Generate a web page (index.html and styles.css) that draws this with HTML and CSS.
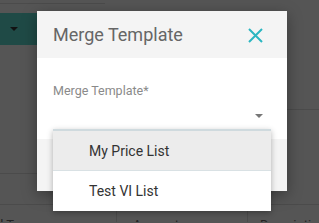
FILE: index.html
```html
<!DOCTYPE html>
<html>
<head>
<meta charset="utf-8">
<link rel="stylesheet" href="styles.css">
</head>
<body>
<div class="page">
  <div class="top"></div>
  <div class="toolbar"><span class="caret-dark"></span></div>
  <div class="rule rule1"></div>
  <div class="rule rule2"></div>
  <div class="table-head">
    <div class="cell c1">d Type</div>
    <div class="cell c2">Amount</div>
    <div class="cell c3">Description</div>
  </div>
</div>

<div class="modal">
  <div class="modal-header">
    <span class="modal-title">Merge Template</span>
    <svg class="close" width="15" height="15" viewBox="0 0 15 15">
      <path d="M1 1 L14 14 M14 1 L1 14" stroke="#2bb6c1" stroke-width="2" fill="none"/>
    </svg>
  </div>
  <div class="modal-body">
    <div class="label">Merge Template*</div>
    <div class="select"><span class="caret"></span></div>
  </div>
  <div class="modal-footer"></div>
</div>

<div class="menu">
  <div class="item active">My Price List</div>
  <div class="item">Test VI List</div>
</div>
</body>
</html>
```

FILE: styles.css
```css
html, body {
  margin: 0;
  padding: 0;
}
body {
  width: 319px;
  height: 223px;
  overflow: hidden;
  background: #555555;
  font-family: Roboto, "Liberation Sans", sans-serif;
  position: relative;
}
.page {
  display: flex;
  flex-direction: column;
}
.top {
  height: 3px;
  width: 105px;
  border-bottom: 1px solid #4b4b4b;
}
.toolbar {
  margin-top: 9px;
  height: 32px;
  width: 140px;
  background: #1f4a46;
  display: flex;
  align-items: center;
  padding-left: 10px;
  box-sizing: border-box;
}
.caret-dark {
  width: 0;
  height: 0;
  border-left: 4px solid transparent;
  border-right: 4px solid transparent;
  border-top: 4px solid #121212;
}
.rule {
  height: 0;
  border-top: 1px solid #4b4b4b;
}
.rule1 {
  margin-top: 64px;
  margin-left: 287px;
}
.rule2 {
  margin-top: 63px;
  width: 37px;
}
.table-head {
  margin-top: 30px;
  border-top: 1px solid #4b4b4b;
  display: grid;
  grid-template-columns: 116px 131px 1fr;
  height: 17px;
  overflow: hidden;
}
.cell {
  font-size: 13px;
  line-height: 15px;
  color: #222;
  padding-top: 12px;
  white-space: nowrap;
  overflow: hidden;
}
.c1 { padding-left: 0; text-indent: -4px; }
.c2 { border-left: 1px solid #4b4b4b; padding-left: 16px; }
.c3 { border-left: 1px solid #4b4b4b; padding-left: 12px; }

.modal {
  position: absolute;
  left: 37px;
  top: 11px;
  width: 250px;
  height: 180px;
  background: #fff;
  box-shadow: 0 4px 14px rgba(0, 0, 0, 0.35);
  display: flex;
  flex-direction: column;
}
.modal-header {
  height: 47px;
  background: #f4f4f4;
  display: flex;
  align-items: center;
  justify-content: space-between;
  padding: 0 24px 0 16px;
}
.modal-title {
  font-size: 18px;
  color: #666;
}
.close {
  display: block;
  margin-top: 1px;
}
.modal-body {
  height: 81px;
  padding: 25px 24px 0 16px;
  box-sizing: border-box;
}
.label {
  font-size: 12.5px;
  color: #8a8a8a;
}
.select {
  display: flex;
  justify-content: flex-end;
  margin-top: 16px;
}
.caret {
  width: 0;
  height: 0;
  border-left: 4px solid transparent;
  border-right: 4px solid transparent;
  border-top: 4px solid #777;
}
.modal-footer {
  flex: 1;
  background: #f4f4f4;
}

.menu {
  position: absolute;
  left: 53px;
  top: 129px;
  width: 218px;
  background: #fff;
  border-top: 2px solid #cfdade;
  box-shadow: 0 2px 6px rgba(0, 0, 0, 0.3);
}
.item {
  height: 40px;
  display: flex;
  align-items: center;
  padding-left: 36px;
  font-size: 14px;
  color: #333;
}
.item.active {
  height: 39px;
  background: #ececec;
  border-bottom: 1px solid #d9e1e4;
}
```
